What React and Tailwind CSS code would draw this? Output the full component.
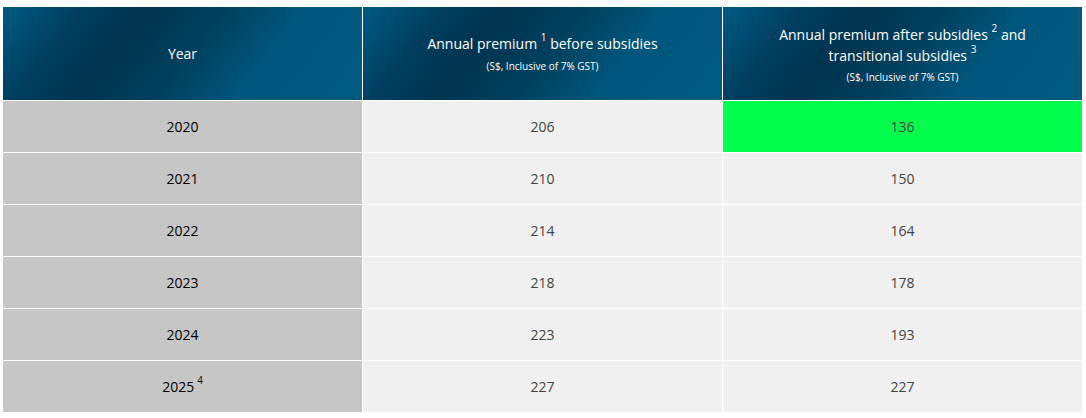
const rows = [
	{ year: '2020', before: '206', after: '136', highlight: true },
	{ year: '2021', before: '210', after: '150' },
	{ year: '2022', before: '214', after: '164' },
	{ year: '2023', before: '218', after: '178' },
	{ year: '2024', before: '223', after: '193' },
	{ year: '2025', note: '4', before: '227', after: '227' }
];

// each header cell repeats the same diagonal sheen
const headBg =
	'bg-[linear-gradient(128deg,#005a82_0%,#003d5e_20%,#00344f_34%,#00415f_52%,#00567c_70%,#005a80_100%)]';

const Sup = ({ children }) => (
	<sup className="relative -top-[2px] align-super text-[10px] leading-none">{children}</sup>
);

const App = () => {
	return (
		<div className="h-[418px] w-[1086px] bg-white pl-[3px] pt-[7px]" style={{ fontFamily: '"Open Sans", sans-serif' }}>
			<div className="grid w-[1079px] grid-cols-[359px_359px_359px] gap-px bg-white">
				<div className={`${headBg} flex h-[93px] items-center justify-center text-[14px] text-white`}>
					Year
				</div>
				<div className={`${headBg} flex h-[93px] flex-col items-center justify-center text-white`}>
					<div className="text-[14px] leading-[20px]">
						Annual premium <Sup>1</Sup> before subsidies
					</div>
					<div className="mt-[5px] text-[10px] leading-[14px]">(S$, Inclusive of 7% GST)</div>
				</div>
				<div className={`${headBg} flex h-[93px] flex-col items-center justify-center text-center text-white`}>
					<div className="text-[14px] leading-[21px]">
						Annual premium after subsidies <Sup>2</Sup> and
						<br />
						transitional subsidies <Sup>3</Sup>
					</div>
					<div className="mt-[4px] text-[10px] leading-[14px]">(S$, Inclusive of 7% GST)</div>
				</div>

				{rows.map( ( row ) => (
					<div key={row.year} className="contents">
						<div className="flex h-[51px] items-center justify-center bg-[#c6c6c6] text-[14px] text-black">
							{row.year}
							{row.note && <span className="ml-[3px]"><Sup>{row.note}</Sup></span>}
						</div>
						<div className="flex h-[51px] items-center justify-center bg-[#f0f0f0] text-[14px] text-[#444]">
							{row.before}
						</div>
						<div className={`flex h-[51px] items-center justify-center text-[14px] text-[#444] ${row.highlight ? 'bg-[#00ff4c]' : 'bg-[#f0f0f0]'}`}>
							{row.after}
						</div>
					</div>
				) )}
			</div>
		</div>
	);
};

export default App;
